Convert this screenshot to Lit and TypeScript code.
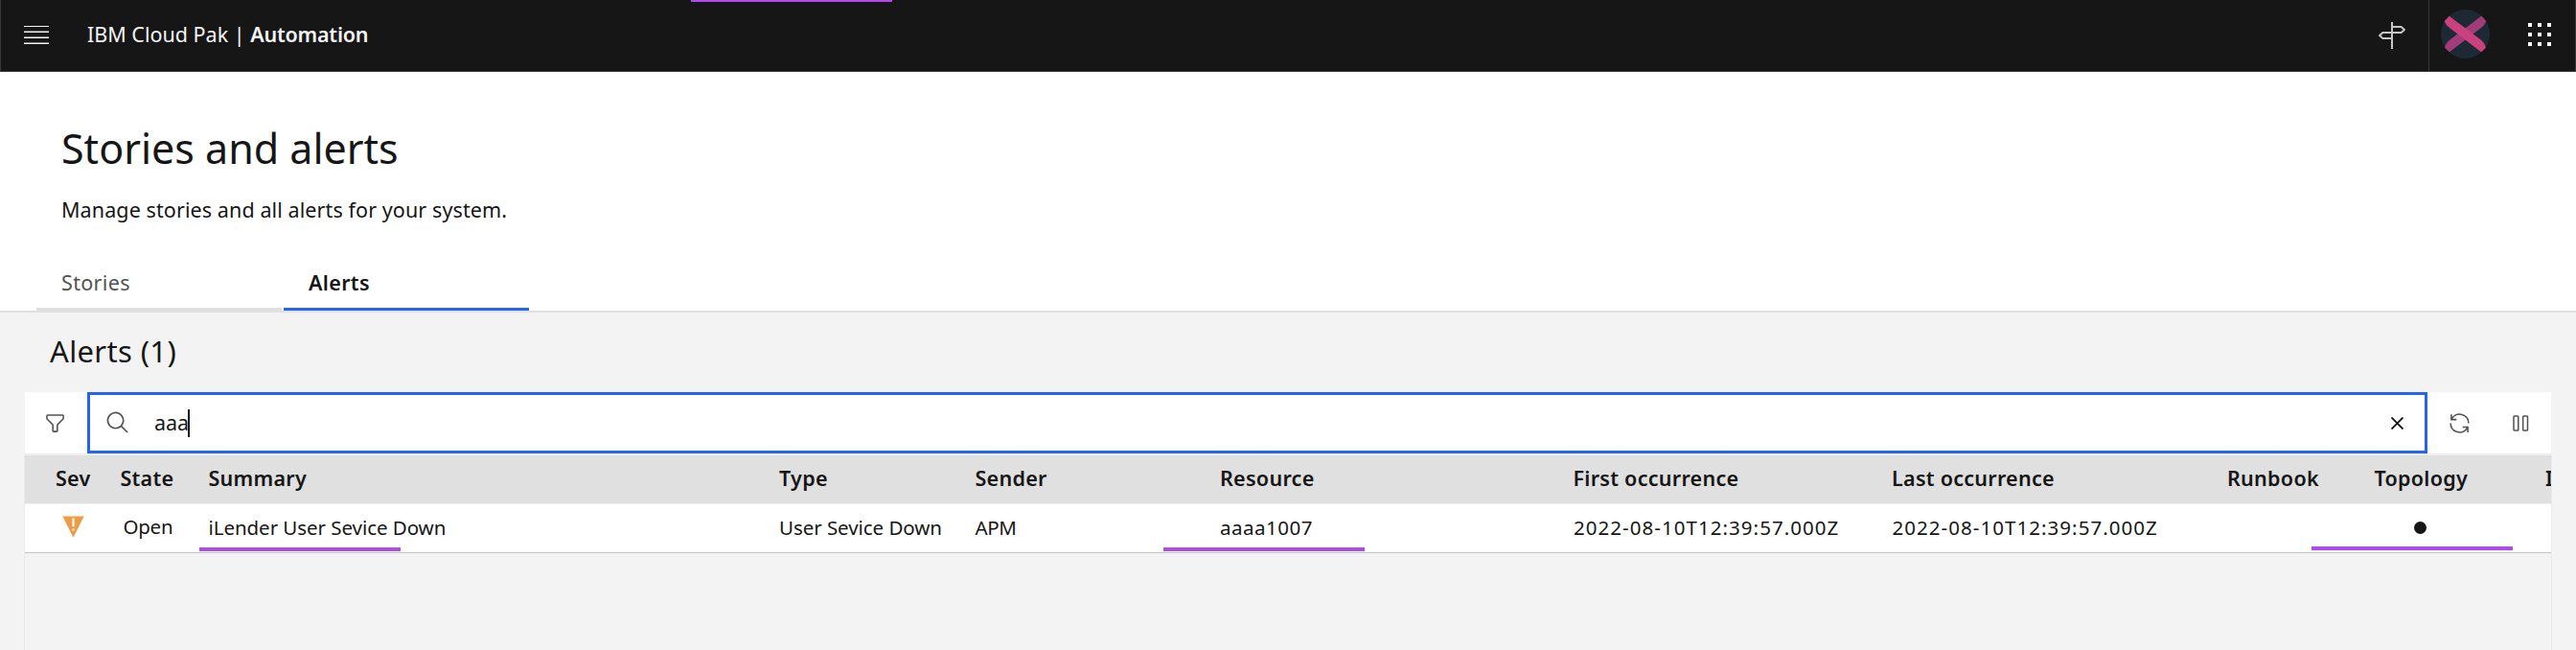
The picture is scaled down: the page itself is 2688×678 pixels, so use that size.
import { LitElement, html, css, svg } from 'lit';
import { customElement } from 'lit/decorators.js';
import { classMap } from 'lit/directives/class-map.js';

@customElement('app-header')
class AppHeader extends LitElement {
  static styles = css`
    :host { display: block; }
    .bar {
      box-sizing: border-box; height: 75px; display: flex; align-items: center;
      background: #161616; border: solid #393939; border-width: 0 1px 1px 1px; color: #f4f4f4;
    }
    svg { display: block; flex: none; }
    .menu { margin-left: 24px; }
    .brand { margin-left: 40px; padding-bottom: 2px; font-size: 21.5px; line-height: 30px; white-space: pre; flex: 1; }
    .brand b { font-weight: 600; letter-spacing: -0.2px; }
    .divider { width: 1px; height: 74px; background: #393939; margin: 0 12px 0 22px; }
    .avatar { margin-bottom: 3px; }
    .apps { margin: 0 25px 2px 40px; }
  `;
  render() {
    const steps = [0, 10, 20];
    return html`
      <div class="bar">
        <svg class="menu" width="26" height="20" viewBox="0 0 26 20">
          <path d="M0 1H26M0 7H26M0 13H26M0 19H26" transform="translate(0 -0.8)" stroke="#f4f4f4" stroke-width="1.6" />
        </svg>
        <div class="brand">IBM Cloud Pak | <b>Automation</b></div>
        <svg width="32" height="36" viewBox="0 0 32 36" fill="none" stroke="#c6c6c6" stroke-width="2">
          <path d="M16 4V32M16 9H25.6L29 12L25.6 15H16M16 15H6.4L3 18L6.4 21H16" stroke-linejoin="round" />
        </svg>
        <div class="divider"></div>
        <svg class="avatar" width="51" height="51" viewBox="0 0 51 51">
          <circle cx="25.5" cy="25.5" r="25.5" fill="#1d2a35" />
          <path d="M42.3 6.7L47.3 12Q46 16 42 19L9 44.3L4 39.7Q5 35 10 31Z" fill="#a03d78" />
          <path d="M8.7 6.7L3.7 12Q5 16 9 19L42 44.3L47 39.7Q46 35 41 31Z" fill="#cb407f" />
        </svg>
        <svg class="apps" width="24" height="24" fill="#fff">
          ${steps.map(y => steps.map(x => svg`<rect x=${x} y=${y} width="4" height="4" />`))}
        </svg>
      </div>
    `;
  }
}

@customElement('page-heading')
class PageHeading extends LitElement {
  static styles = css`
    :host { display: block; }
    .head { box-sizing: border-box; height: 251px; background: #fff; border-bottom: 2px solid #e0e0e0; padding: 51px 0 0 38px; display: flex; flex-direction: column; }
    h1 { margin: 0 0 0 26px; font-weight: 400; font-size: 43px; line-height: 58px; letter-spacing: 0; }
    p { margin: 20px 0 0 26px; font-size: 21.5px; line-height: 30px; letter-spacing: 0.1px; }
    .tabs { display: flex; gap: 2px; margin-top: auto; }
    .tab { box-sizing: border-box; width: 256px; height: 60px; padding: 16px 0 0 26px; border-bottom: 3px solid #e0e0e0; font-size: 21.5px; line-height: 30px; letter-spacing: 0.35px; color: #525252; }
    .active { border-color: #2563f5; font-weight: 600; color: #161616; }
  `;
  render() {
    return html`
      <div class="head">
        <h1>Stories and alerts</h1>
        <p>Manage stories and all alerts for your system.</p>
        <div class="tabs">
          ${['Stories', 'Alerts'].map(t => html`<div class=${classMap({ tab: true, active: t === 'Alerts' })}>${t}</div>`)}
        </div>
      </div>
    `;
  }
}

@customElement('alerts-table')
class AlertsTable extends LitElement {
  static styles = css`
    :host { display: block; }
    h2 { box-sizing: border-box; margin: 0; padding: 19px 0 0 52px; height: 83px; font-weight: 400; font-size: 31px; line-height: 42px; letter-spacing: 0.35px; }
    svg { display: block; flex: none; }
    .panel { margin: 0 25px; }
    .toolbar { height: 64px; margin: 0 1px; background: #fff; display: flex; align-items: center; }
    .tool { width: 65px; display: flex; justify-content: center; box-sizing: border-box; padding-right: 2px; }
    .search { box-sizing: border-box; flex: 1; height: 64px; border: 3px solid #2563f5; display: flex; align-items: center; padding: 0 22.5px 0 16px; }
    .query { margin-left: 25px; font-size: 21.5px; line-height: 30px; letter-spacing: 0; }
    .caret { width: 2px; height: 29px; background: #161616; margin: 1px auto 0 -1px; }
    .refresh { width: 67px; padding: 0; }
    .pause { width: 62px; padding: 0 1px 0 0; }
    .frame { border: 1px solid #ebebeb; border-top: 2px solid #efefef; border-bottom: 0; height: 203px; overflow: hidden; }
    .row {
      display: grid; box-sizing: border-box; align-items: center; padding-left: 32px; white-space: nowrap; overflow: hidden;
      grid-template-columns: 67.5px 92px 595.5px 204.5px 255.5px 368.5px 332.5px 350px 153.5px 178.5px 8px;
    }
    .labels { height: 51px; background: #e0e0e0; border-bottom: 1px solid #efefef; font-weight: 600; font-size: 21.5px; line-height: 30px; letter-spacing: 0.28px; padding-bottom: 3px; }
    .data { height: 51px; background: #fff; border-bottom: 1px solid #c6c6c6; font-size: 20.5px; line-height: 30px; padding-bottom: 3px; }
    .sev { margin-left: 7px; }
    .state { padding: 0 0 1px 3px; letter-spacing: -0.25px; }
    .desc { letter-spacing: -0.05px; }
    .sender { letter-spacing: -0.4px; }
    .resource { letter-spacing: 0.5px; }
    .time { letter-spacing: 1.05px; padding-left: 0.5px; }
    .dot { width: 13.5px; height: 13.5px; border-radius: 50%; background: #161616; margin: 2px 0 0 41px; }
  `;
  labels = ['Sev', 'State', 'Summary', 'Type', 'Sender', 'Resource', 'First occurrence', 'Last occurrence', 'Runbook', 'Topology', 'I'];
  render() {
    return html`
      <h2>Alerts (1)</h2>
      <div class="panel">
        <div class="toolbar">
          <div class="tool">
            <svg width="25" height="25" viewBox="0 0 32 32" fill="#525252"><path d="M18 28H14a2 2 0 0 1-2-2V18.41L4.59 11A2 2 0 0 1 4 9.59V6A2 2 0 0 1 6 4H26a2 2 0 0 1 2 2V9.59A2 2 0 0 1 27.41 11L20 18.41V26A2 2 0 0 1 18 28ZM6 6V9.59l8 8V26h4V17.59l8-8V6Z" /></svg>
          </div>
          <div class="search">
            <svg width="26" height="26" viewBox="0 0 32 32" fill="#525252"><path d="M29 27.586l-7.552-7.552a11.018 11.018 0 1 0-1.414 1.414L27.586 29ZM4 13a9 9 0 1 1 9 9A9.01 9.01 0 0 1 4 13Z" /></svg>
            <span class="query">aaa</span><span class="caret"></span>
            <svg width="13" height="13" stroke="#161616" stroke-width="1.9"><path d="M0.5 0.5L12.5 12.5M12.5 0.5L0.5 12.5" /></svg>
          </div>
          <div class="tool refresh">
            <svg width="25" height="25" viewBox="0 0 32 32" fill="#525252"><path d="M12 10H6.78A11 11 0 0 1 27 16h2A13 13 0 0 0 6 7.68V4H4v8h8zM20 22h5.22A11 11 0 0 1 5 16H3a13 13 0 0 0 23 8.32V28h2V20H20z" /></svg>
          </div>
          <div class="tool pause">
            <svg width="17" height="17" fill="none" stroke="#525252" stroke-width="1.5"><rect x="1" y="1" width="4.8" height="15" rx="0.8" /><rect x="10.7" y="1" width="4.8" height="15" rx="0.8" /></svg>
          </div>
        </div>
        <div class="frame">
          <div class="row labels">${this.labels.map(l => html`<span>${l}</span>`)}</div>
          <div class="row data">
            <svg class="sev" width="23" height="23" viewBox="0 0 23 23">
              <path d="M0.4 0.5H22.6L11.5 22.7Z" fill="#ee9c44" />
              <path d="M10.4 2.6H12.6V11.2H10.4ZM10.4 13.4H12.6V15.6H10.4Z" fill="#fff" />
            </svg>
            <span class="state">Open</span>
            <span class="desc">iLender User Sevice Down</span>
            <span class="desc">User Sevice Down</span>
            <span class="sender">APM</span>
            <span class="resource">aaaa1007</span>
            <span class="time">2022-08-10T12:39:57.000Z</span>
            <span class="time">2022-08-10T12:39:57.000Z</span>
            <span></span>
            <span class="dot"></span>
          </div>
        </div>
      </div>
    `;
  }
}

@customElement('app-root')
class AppRoot extends LitElement {
  static styles = css`
    :host {
      display: block; position: relative; height: 678px; overflow: hidden; background: #f3f3f3; color: #161616;
      font-family: "Noto Sans", "Open Sans", sans-serif;
    }
    .mark { position: absolute; width: 210px; height: 4px; background: #b14aed; }
    .top { left: 721px; top: -2px; }
    .summary { left: 208px; top: 571px; }
    .resource { left: 1214px; top: 571px; }
    .topology { left: 2412px; top: 570px; }
  `;
  render() {
    return html`
      <app-header></app-header>
      <page-heading></page-heading>
      <alerts-table></alerts-table>
      <div class="mark top"></div>
      <div class="mark summary"></div>
      <div class="mark resource"></div>
      <div class="mark topology"></div>
    `;
  }
}
